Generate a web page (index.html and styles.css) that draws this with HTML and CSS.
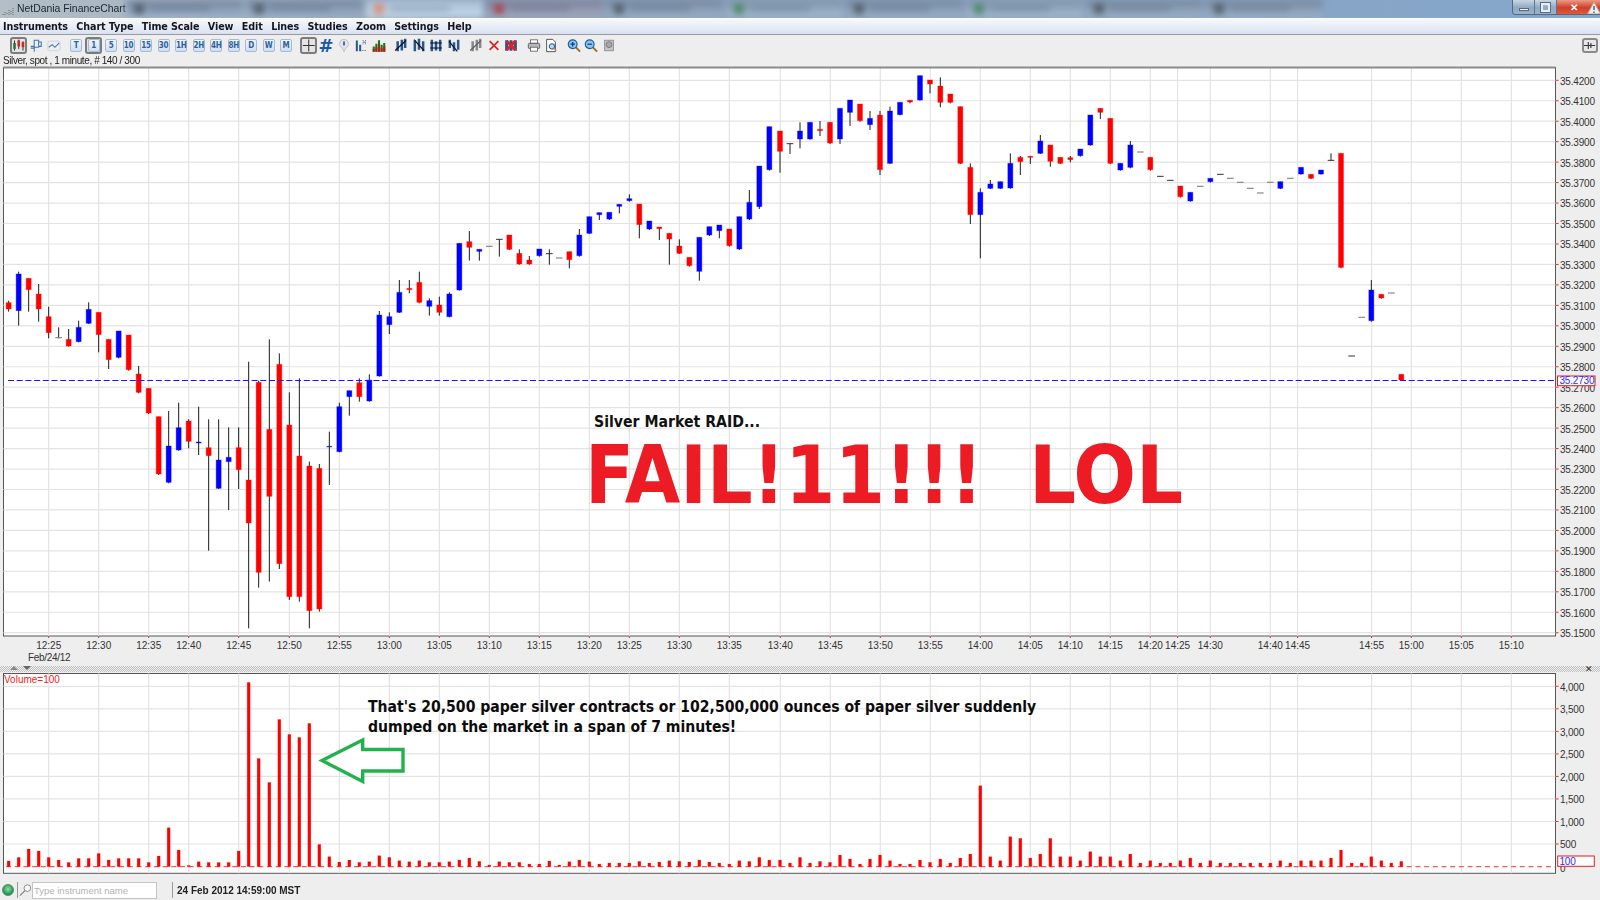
FILE: index.html
```html
<!DOCTYPE html>
<html lang="en">
<head>
<meta charset="utf-8">
<title>NetDania FinanceChart</title>
<link rel="stylesheet" href="styles.css">
</head>
<body>
<svg class="defs" width="0" height="0" aria-hidden="true">
  <symbol id="draw-a" viewBox="0 0 16 18"><path d="M4 4v12M9 2v13M13 1v11" stroke="#27578f" stroke-width="3"/><path d="M1 15 14 3" stroke="#111" stroke-width="1.4"/></symbol>
  <symbol id="draw-b" viewBox="0 0 16 18"><path d="M3 3v13M8 1v13M13 4v12" stroke="#27578f" stroke-width="3"/><path d="M2 2 14 15" stroke="#111" stroke-width="1.4"/></symbol>
  <symbol id="draw-c" viewBox="0 0 16 18"><path d="M3 2v14M8 4v11M13 2v14" stroke="#27578f" stroke-width="3"/><path d="M1 6h14M1 12h14" stroke="#111" stroke-width="1.2"/></symbol>
  <symbol id="draw-d" viewBox="0 0 16 18"><path d="M3 2v10M8 5v11M13 2v12" stroke="#27578f" stroke-width="3"/><path d="M2 4 12 16" stroke="#111" stroke-width="1.4"/></symbol>
</svg>

<header class="titlebar">
  <svg class="app-icon" viewBox="0 0 12 10"><path d="M1 8v1M3 6v3M5 7v2M7 4v5M9 5v4M11 2v7" stroke="#666" stroke-width="1" stroke-dasharray="1 1"/></svg>
  <span class="app-title">NetDania FinanceChart</span>
  <div class="tabs" aria-hidden="true">
    <i class="tab t1"></i><i class="tab t1"></i><i class="tab t2"></i><i class="tab t3"></i><i class="tab t1"></i><i class="tab t4"></i><i class="tab t1"></i><i class="tab t4"></i><i class="tab t1"></i><i class="tab t1"></i>
  </div>
  <div class="winbtns">
    <div class="winbtn"><i class="min"></i></div>
    <div class="winbtn"><i class="max"></i></div>
    <div class="winbtn close"><span>✕</span>
      <svg class="warn" viewBox="0 0 14 14"><path d="M7 1 13.5 13H.5Z" fill="#eee" stroke="#aaa"/><path d="M7 5v4M7 10.5v1.5" stroke="#555" stroke-width="1.4"/></svg>
    </div>
  </div>
</header>

<nav class="menubar">
  <span>Instruments</span><span>Chart Type</span><span>Time Scale</span><span>View</span><span>Edit</span><span>Lines</span><span>Studies</span><span>Zoom</span><span>Settings</span><span>Help</span>
</nav>

<div class="toolbar">
  <div class="tgroup first">
    <div class="slot on"><svg viewBox="0 0 16 16"><path d="M3 2v12M8 1v11M13 3v11" stroke="#111"/><rect x="1.5" y="5" width="3" height="7" fill="#1f7a2c"/><rect x="6.5" y="2" width="3" height="7" fill="#d2231f"/><rect x="11.5" y="4" width="3" height="6" fill="#d2231f"/></svg></div>
    <div class="slot"><svg viewBox="0 0 16 16" fill="none" stroke="#3f74b5" stroke-width="1.2"><path d="M2 9h4v6M6 11h-4M6 2h5v8H6zM11 4h3v5h-3"/></svg></div>
    <div class="slot"><svg viewBox="0 0 16 16" fill="none"><rect x="1" y="3" width="14" height="11" rx="2" stroke="#c3d3e6"/><path d="M2 10l4-3 3 3 5-5" stroke="#3f74b5" stroke-width="1.2"/></svg></div>
  </div>
  <div class="tgroup">
    <div class="slot"><b class="tf">T</b></div>
    <div class="slot on"><b class="tf">1</b></div>
    <div class="slot"><b class="tf">5</b></div>
    <div class="slot"><b class="tf">10</b></div>
    <div class="slot"><b class="tf">15</b></div>
    <div class="slot"><b class="tf">30</b></div>
    <div class="slot"><b class="tf">1H</b></div>
    <div class="slot"><b class="tf">2H</b></div>
    <div class="slot"><b class="tf">4H</b></div>
    <div class="slot"><b class="tf">8H</b></div>
    <div class="slot"><b class="tf">D</b></div>
    <div class="slot"><b class="tf">W</b></div>
    <div class="slot"><b class="tf">M</b></div>
  </div>
  <div class="tgroup">
    <div class="slot on"><svg viewBox="0 0 16 16"><path d="M8 1v14M1 8h14" stroke="#333" stroke-width="1.2"/></svg></div>
    <div class="slot hash">#</div>
    <div class="slot"><svg viewBox="0 0 16 16"><path d="M8 1a5 5 0 0 1 2 9.6L8 15l-2-4.4A5 5 0 0 1 8 1Z" fill="#e6e6ea" stroke="#bbb"/><path d="M8 3.5v4.5" stroke="#2c5fa8" stroke-width="2"/></svg></div>
    <div class="slot"><svg viewBox="0 0 16 18"><path d="M3 3v13M7 8v8" stroke="#27578f" stroke-width="2.4"/><path d="M10 3h1M13 3h1M10 7h1M13 7h1M10 5h4" stroke="#27578f"/><path d="M9 15h6" stroke="#27578f" stroke-dasharray="1 1"/></svg></div>
    <div class="slot"><svg viewBox="0 0 16 16"><path d="M2 15V9M5 15V6M8 15V2M11 15V7M14 15V5" stroke="#127a1e" stroke-width="2.4"/><path d="M2 15v-3M5 15v-5M8 15V7M11 15v-4M14 15v-6" stroke="#b0201a" stroke-width="2.4"/></svg></div>
  </div>
  <div class="tgroup">
    <div class="slot"><svg viewBox="0 0 16 18"><use href="#draw-a"/></svg></div>
    <div class="slot"><svg viewBox="0 0 16 18"><use href="#draw-b"/></svg></div>
    <div class="slot"><svg viewBox="0 0 16 18"><use href="#draw-c"/></svg></div>
    <div class="slot"><svg viewBox="0 0 16 18"><use href="#draw-d"/></svg></div>
  </div>
  <div class="tgroup">
    <div class="slot dim"><svg viewBox="0 0 16 18"><use href="#draw-a"/></svg></div>
    <div class="slot"><svg viewBox="0 0 16 16"><path d="M3 3l10 10M13 3 3 13" stroke="#d8232a" stroke-width="2"/></svg></div>
    <div class="slot"><svg viewBox="0 0 16 16"><path d="M3 2v12M8 2v12M13 2v12" stroke="#27578f" stroke-width="3.4"/><path d="M3 3l10 10M13 3 3 13" stroke="#d8232a" stroke-width="3.4"/></svg></div>
  </div>
  <div class="tgroup">
    <div class="slot"><svg viewBox="0 0 16 16"><rect x="4" y="1.5" width="8" height="4" fill="#fff" stroke="#666"/><rect x="1.5" y="5.5" width="13" height="6" rx="1.5" fill="#b8b8b8" stroke="#555"/><rect x="4" y="10" width="8" height="4.5" fill="#fff" stroke="#666"/></svg></div>
    <div class="slot"><svg viewBox="0 0 16 16"><path d="M3 1h7l3 3v11H3Z" fill="#fff" stroke="#444"/><circle cx="9" cy="9" r="3" fill="#bcd8f2" stroke="#2c5fa8" stroke-width="1.2"/><path d="M11 11l3 3" stroke="#c88a2a" stroke-width="1.6"/></svg></div>
  </div>
  <div class="tgroup">
    <div class="slot"><svg viewBox="0 0 16 16"><path d="M10 10l5 5" stroke="#a5701f" stroke-width="2.2"/><circle cx="6.5" cy="6.5" r="5" fill="#8fc3ee" stroke="#1d5fa8" stroke-width="1.4"/><path d="M4 6.5h5M6.5 4v5" stroke="#0d3c78" stroke-width="1.4"/></svg></div>
    <div class="slot"><svg viewBox="0 0 16 16"><path d="M10 10l5 5" stroke="#a5701f" stroke-width="2.2"/><circle cx="6.5" cy="6.5" r="5" fill="#8fc3ee" stroke="#1d5fa8" stroke-width="1.4"/><path d="M4 6.5h5" stroke="#0d3c78" stroke-width="1.4"/></svg></div>
    <div class="slot"><svg viewBox="0 0 16 16"><rect x="3" y="2" width="10" height="12" fill="#c6c6c6" stroke="#8a8a8a"/><circle cx="8" cy="7" r="3.4" fill="#a8a8a8" stroke="#777"/></svg></div>
  </div>
  <div class="pin"><svg viewBox="0 0 14 12"><path d="M0 6h13M5 2v8M8 3v6" stroke="#333" stroke-width="1.3"/></svg></div>
</div>

<div class="infoline">Silver, spot , 1 minute, # 140 / 300</div>

<svg id="price" class="panel price" viewBox="0 66 1600 600"></svg>

<div class="splitter">
  <i class="tri up"></i><i class="tri down"></i><span class="split-x">✕</span>
</div>

<svg id="volume" class="panel volume" viewBox="0 672 1600 202"></svg>

<footer class="statusbar">
  <i class="led"></i>
  <i class="vsep"></i>
  <svg class="search" viewBox="0 0 14 14"><circle cx="9" cy="5" r="3.6" fill="#f6f6f6" stroke="#888"/><path d="M6.5 7.5 1 13" stroke="#888" stroke-width="1.3"/></svg>
  <div class="instrument">Type instrument name</div>
  <i class="vsep wide"></i>
  <strong class="stamp">24 Feb 2012 14:59:00 MST</strong>
</footer>

<script src="chart.js"></script>
</body>
</html>
```
FILE: styles.css
```css
* { box-sizing: border-box; }
html, body { margin: 0; padding: 0; }
body {
  width: 1600px;
  height: 900px;
  overflow: hidden;
  background: #eeeeee;
  color: #222;
  font-family: "Liberation Sans", Arial, sans-serif;
  display: flex;
  flex-direction: column;
}
.defs { position: absolute; }

/* title bar */
.titlebar {
  height: 18px;
  flex: none;
  display: flex;
  align-items: flex-start;
  overflow: hidden;
  background: linear-gradient(90deg, #b3bec6 0, #a7b6c4 10%, #8aa0b8 30%, #8aa3bf 60%, #85a7cc 100%);
}
.app-icon { width: 12px; height: 10px; margin: 6px 0 0 2px; flex: none; }
.app-title { width: 112px; margin-left: 3px; padding-top: 2px; flex: none; font: 10.4px/13px "Liberation Sans", sans-serif; color: #1c2430; white-space: nowrap; filter: blur(.3px); }
.tabs { flex: 1; min-width: 0; overflow: hidden; display: flex; gap: 3px; height: 18px; margin-left: -3px; filter: blur(3px); }
.tab { width: 117px; height: 18px; flex: none; position: relative; }
.tab::before { content: ""; position: absolute; left: 8px; top: 4px; width: 10px; height: 10px; background: #56616f; }
.tab::after { content: ""; position: absolute; left: 24px; top: 7px; width: 60px; height: 4px; background: rgba(60,75,95,.3); }
.t1 { background: linear-gradient(#73859c, #9db4cc); }
.t2 { background: linear-gradient(#a9bdd1, #c5d9ec); }
.t2::before { background: #d98f7e; }
.t3 { background: linear-gradient(#7b7f98, #a4adc2); }
.t3::before { background: #a34a55; }
.t4 { background: linear-gradient(#7e92a8, #a4bcd2); }
.t4::before { background: #4f8a6a; }
.winbtns { flex: none; display: flex; height: 15px; border: 1px solid #55677c; border-top: 0; border-right: 0; border-radius: 0 0 0 4px; overflow: hidden; }
.winbtn { width: 22px; display: flex; align-items: center; justify-content: center; background: linear-gradient(#c8d6e4, #8ea9c4 55%, #9bb4cc); border-right: 1px solid #60748a; }
.winbtn.close { width: 43px; border-right: 0; position: relative; background: linear-gradient(#eb9a84, #cf3f26 55%, #dc5a40); color: #fff; font-size: 10px; font-weight: bold; justify-content: flex-start; padding-left: 13px; }
.min { width: 10px; height: 3px; margin-top: 5px; background: #f4f4f4; border: 1px solid #58687a; }
.max { width: 9px; height: 9px; background: transparent; border: 2px solid #e9eef3; outline: 1px solid #5c6c7e; }
.warn { position: absolute; right: -1px; top: 1px; width: 14px; height: 14px; }

/* menu */
.menubar {
  height: 16px;
  flex: none;
  display: flex;
  gap: 8.4px;
  padding: 1px 0 0 3px;
  background: linear-gradient(#f6f8fc, #d9e1f2);
  border-top: 1px solid #fff;
  font: bold 10.7px/13px "DejaVu Sans", sans-serif;
  font-stretch: condensed;
  letter-spacing: -.1px;
  color: #16161e;
  white-space: nowrap;
}
.menubar span { filter: blur(.3px); }

/* toolbar */
.toolbar {
  height: 21px;
  flex: none;
  display: flex;
  align-items: center;
  padding-left: 9.75px;
  border-top: 1px solid #9a9a9a;
}
.tgroup { display: flex; margin-left: 5px; }
.tgroup.first { margin-left: 0; }
.slot { width: 17.5px; height: 17px; display: flex; align-items: center; justify-content: center; flex: none; }
.slot svg { width: 14px; height: 15px; display: block; }
.slot.on { border: 2px solid #7c7c7c; border-radius: 3px; background: #e4e4e4; }
.slot.dim svg { filter: grayscale(1) opacity(.65); }
.tf {
  width: 12px; height: 13px;
  display: block;
  text-align: center;
  font: bold 8px/12px "DejaVu Sans", sans-serif;
  font-stretch: condensed;
  color: #2e5f9e;
  background: linear-gradient(#f0f5fb, #cfdff0);
  border: 1px solid #a3bbd6;
  border-radius: 2px;
  letter-spacing: -.3px;
}
.hash { font: bold 18px/17px "DejaVu Sans", sans-serif; color: #1557a8; }
.pin { margin-left: auto; margin-right: 2px; width: 16px; height: 15px; border: 2px solid #8a8a8a; border-radius: 3px; background: #e8e8e8; display: flex; }
.pin svg { width: 12px; height: 11px; }

.infoline { height: 11px; flex: none; padding-left: 3px; font-size: 10px; line-height: 11px; color: #222; letter-spacing: -.4px; white-space: nowrap; filter: blur(.3px); }

/* chart panels */
.panel { display: block; flex: none; width: 1600px; }
.price { height: 600px; }
.volume { height: 202px; }
.frame { fill: #fff; stroke: #555; stroke-width: 1; }
.frame-top { stroke: #8a8a8a; stroke-width: 2; }
.grid { stroke: #e3e3e3; stroke-width: 1.2; }
.tick { stroke: #ee2a2a; stroke-width: 1; }
.axis { font: 10px "Liberation Sans", Arial, sans-serif; letter-spacing: -.2px; fill: #333; }
.time { font: 10px "Liberation Sans", Arial, sans-serif; fill: #333; text-anchor: middle; }
.date { font: 10px "Liberation Sans", Arial, sans-serif; letter-spacing: -.3px; fill: #333; }
.wick { stroke: #1c1c1c; stroke-width: 1; }
.doji-k { stroke: #333; stroke-width: 1; }
.doji-g { stroke: #888; stroke-width: 1.2; }
.body-r { fill: #ff0000; stroke: #ff0000; stroke-opacity: .35; stroke-width: 1; }
.body-b { fill: #0000ff; stroke: #0000ff; stroke-opacity: .35; stroke-width: 1; }
.bar { fill: #ff0000; stroke: #ff0000; stroke-opacity: .25; stroke-width: .6; }
.priceline { stroke: #1414ff; stroke-width: 1; stroke-dasharray: 6 2.7; }
.volline { stroke: #ff3030; stroke-width: 1; stroke-dasharray: 5 3.7; }
.tagbox { fill: #fff; stroke: #f01818; stroke-width: 1; }
.tag { font: 10px "Liberation Sans", Arial, sans-serif; letter-spacing: -.2px; fill: #2a2aff; }
.vol-title { font: 10px "Liberation Sans", Arial, sans-serif; fill: #ff2020; }
.raid { font: bold 15.7px "DejaVu Sans", sans-serif; font-stretch: condensed; fill: #111; }
.fail { font: bold 81px "DejaVu Sans", sans-serif; font-stretch: condensed; fill: #ed1c24; }
.note { font: bold 15.6px "DejaVu Sans", sans-serif; font-stretch: condensed; fill: #0c0c0c; }
.arrow { fill: #fff; stroke: #22b14c; stroke-width: 3.4; }

/* splitter */
.splitter {
  height: 6px;
  flex: none;
  position: relative;
  background: repeating-conic-gradient(#bdbdbd 0 25%, #f2f2f2 0 50%) 0 0 / 2px 2px;
}
.tri { position: absolute; top: 0; width: 0; height: 0; border-left: 4px solid transparent; border-right: 4px solid transparent; }
.tri.up { left: 10px; border-bottom: 4px solid #888; }
.tri.down { left: 23px; border-top: 4px solid #666; }
.split-x { position: absolute; right: 7px; top: -2px; font-size: 9px; line-height: 10px; color: #333; }

/* status bar */
.statusbar { flex: 1; display: flex; align-items: center; padding: 6px 0 0 2px; }
.led { width: 12px; height: 12px; border-radius: 50%; flex: none; background: radial-gradient(circle at 50% 40%, #8fe0a8, #1f9a55 65%, #146b3a); border: 1px solid #5a8a6a; }
.vsep { width: 1px; height: 16px; margin-left: 3px; background: #999; flex: none; }
.vsep.wide { margin-left: 15px; }
.search { width: 13px; height: 14px; margin-left: 1px; flex: none; }
.instrument { width: 125px; height: 17px; padding-left: 1px; background: #fff; border: 1px solid #c4c4c4; font-size: 9.5px; line-height: 15px; color: #b2b2b2; white-space: nowrap; flex: none; }
.stamp { margin-left: 4px; font-size: 10px; color: #222; white-space: nowrap; filter: blur(.25px); }
```
FILE: chart.js
```js
// [x, bodyTop, bodyBottom, wickTop, wickBottom, kind] measured in 3x chart units per segment
var seg1 = [
[26,128,147,122,155,'r'],[56,42,152,35,197,'b'],[86,55,89,55,155,'r'],[116,102,147,72,185,'r'],[146,170,218,140,235,'r'],
[176,233,233,202,235,'g'],[206,238,258,207,260,'r'],[236,202,245,182,247,'b'],[266,148,190,127,192,'b'],[296,157,224,157,277,'r'],
[326,238,299,238,327,'r'],[356,213,292,213,295,'b'],[386,225,329,225,332,'r'],[416,342,397,318,400,'r'],[446,385,459,385,462,'r'],
[476,470,642,470,645,'r'],[506,558,667,453,670,'b'],[536,503,570,428,572,'b'],[566,483,544,478,565,'r'],[596,546,549,440,585,'b'],
[626,563,587,478,872,'r'],[656,600,685,478,687,'b'],[686,592,605,502,750,'b'],[716,563,629,502,687,'r'],[746,660,789,305,1105,'r'],
[776,367,937,362,983,'r'],[808,508,709,238,965,'r'],[838,313,911,280,927,'r'],[868,495,1010,397,1020,'r'],[898,588,1010,355,1025,'r'],
[928,618,1052,605,1105,'r'],[958,625,1047,612,1055,'r'],[988,559,561,515,675,'b'],[1018,440,575,428,577,'b'],[1048,392,410,392,467,'b'],
[1078,368,410,355,425,'r'],[1108,360,423,343,425,'b'],[1138,165,348,153,350,'b'],[1168,170,194,157,222,'b'],[1198,97,157,60,159,'b'],
[1228,85,89,60,100,'r'],[1258,67,127,35,130,'r'],[1288,122,139,115,167,'b'],[1318,135,157,110,167,'r'],[1348,102,170,97,172,'b']
];
var seg2 = [
[58,550,690,550,692,'b'],[88,545,562,513,602,'r'],[118,568,574,568,602,'b'],[148,559,559,559,559,'g'],[178,538,538,538,590,'k'],
[208,525,568,525,570,'r'],[238,580,612,568,614,'r'],[268,600,612,588,614,'r'],[298,567,587,567,590,'b'],[328,581,581,568,614,'k'],
[358,594,594,594,594,'g'],[388,575,599,575,625,'r'],[418,525,587,507,590,'b'],[448,470,520,470,522,'b'],[478,458,464,458,480,'b'],
[508,457,477,457,480,'b'],[538,433,439,433,460,'b'],[568,416,422,403,425,'b'],[598,432,494,432,535,'r'],[628,483,507,483,510,'b'],
[658,501,506,501,540,'r'],[688,520,537,520,614,'r'],[718,558,580,538,582,'r'],[748,592,617,592,620,'r'],[778,532,634,532,662,'b'],
[808,500,525,500,528,'b'],[838,495,512,495,535,'b'],[868,507,557,507,560,'r'],[898,470,567,470,570,'b'],[928,427,477,390,480,'b'],
[958,318,440,318,447,'b'],[988,200,329,200,332,'b'],[1020,213,274,213,338,'r'],[1050,251,251,251,282,'k'],[1080,213,237,187,265,'b'],
[1110,187,237,187,239,'b'],[1140,208,212,183,228,'r'],[1170,187,249,187,252,'r'],[1200,145,237,145,252,'b'],[1230,120,157,120,198,'b'],
[1260,132,182,132,185,'r'],[1290,175,194,153,210,'b'],[1320,165,329,153,345,'r'],[1350,153,310,140,312,'b'],[1380,127,164,127,166,'b'],
[1410,121,126,121,130,'r'],[1440,47,120,47,122,'b'],[1470,60,72,60,100,'r']
];
var seg3 = [
[61,78,127,52,142,'r'],[91,102,127,102,130,'r'],[121,140,310,140,312,'r'],[151,322,464,310,492,'r'],[181,397,464,385,595,'b'],
[211,372,385,360,387,'b'],[241,365,385,365,387,'b'],[271,310,384,280,386,'b'],[301,292,305,288,345,'r'],[331,289,292,288,312,'r'],
[361,243,280,225,282,'b'],[391,255,304,255,320,'r'],[421,292,310,292,312,'r'],[451,293,299,288,307,'r'],[481,267,287,267,290,'b'],
[511,165,255,165,257,'b'],[541,145,157,145,177,'r'],[571,175,310,175,312,'r'],[601,310,330,310,332,'b'],[631,255,322,243,325,'b'],
[661,276,276,276,276,'g'],[691,292,329,292,332,'r'],[721,349,349,349,349,'k'],[751,361,361,361,361,'k'],[781,378,410,378,413,'r'],
[811,397,423,397,425,'b'],[841,379,379,379,379,'g'],[871,355,365,355,368,'b'],[901,343,343,343,343,'k'],[931,355,355,355,355,'g'],
[961,367,367,367,367,'g'],[991,385,385,385,385,'g'],[1021,399,399,399,399,'g'],[1051,367,367,367,367,'g'],[1081,365,385,365,387,'b'],
[1111,355,355,355,355,'g'],[1143,322,342,322,344,'b'],[1173,343,355,343,357,'r'],[1203,330,342,330,344,'b'],[1233,301,301,280,302,'k'],
[1263,280,622,280,625,'r'],[1295,888,888,888,888,'k'],[1325,772,772,772,772,'g'],[1354,690,782,660,785,'b'],[1384,703,714,703,716,'r'],
[1414,699,699,699,699,'g'],[1444,943,960,943,960,'r']
];

var candles = [];
[[seg1, 0, 260], [seg2, 440, 60], [seg3, 920, 60]].forEach(function (s) {
  s[0].forEach(function (c) {
    candles.push({
      x: s[1] + c[0] / 3,
      top: s[2] + c[1] / 3, bot: s[2] + c[2] / 3,
      wt: s[2] + c[3] / 3, wb: s[2] + c[4] / 3,
      k: c[5]
    });
  });
});

// volume bar heights, px
var volA = [5.7,9.3,17.7,15.7,9.3,6.7,4.3,8.3,8.3,13.3,6.7,8.3,8.3,8.3,4.3,10.7,39,16.7,1.3,5,4.3,4.3,4.3,15.7,184.3,108.3,84.3,147.3,132.3,129.3,143.3,22.3];
// the rest, as bar tops in 3x units above a baseline of 200
var volB = [170,186,180,187,185,167,172,182,185,182,187,187,185,180,174,184,195,185,187,187,192,192,183,195,185,180,185,192,189,189,189,184,189,186,182,184,186,180,186,189,192,182,184,172,180,180,189,172,189,184,187,165,177,192,177,165,182,192,192,180,187,177,189,174,162,-43,170,182,110,115,174,162,115,170,170,182,155,170,170,182,162,189,182,189,189,182,174,189,182,189,189,189,189,189,189,182,189,182,182,182,174,150,189,189,170,182,189,184];
var volumes = volA.concat(volB.map(function (t) { return (200 - t) / 3; }));

var gridX = [48.7,98.7,148.7,188.7,238.7,289.3,339.3,389.3,439.3,489.3,539.3,589.3,629.3,679.3,729.3,780.3,830.3,880.3,930.3,980.3,1030.3,1070.3,1110.3,1150.3,1177.6,1210.3,1270.3,1297.6,1371.6,1411.3,1461.3,1511.3];
var timeLabels = ['12:25','12:30','12:35','12:40','12:45','12:50','12:55','13:00','13:05','13:10','13:15','13:20','13:25','13:30','13:35','13:40','13:45','13:50','13:55','14:00','14:05','14:10','14:15','14:20','14:25','14:30','14:40','14:45','14:55','15:00','15:05','15:10'];

function line(x1, y1, x2, y2, cls) {
  return '<line x1="' + x1 + '" y1="' + y1 + '" x2="' + x2 + '" y2="' + y2 + '" class="' + cls + '"/>';
}
function text(x, y, cls, s) {
  return '<text x="' + x + '" y="' + y + '" class="' + cls + '">' + s + '</text>';
}

var L = 3.5, R = 1555.5;

// price panel
(function () {
  var T = 67.5, B = 636, out = '';
  out += '<rect x="' + L + '" y="' + T + '" width="' + (R - L) + '" height="' + (B - T) + '" class="frame"/>';
  var i, y;
  for (i = 0; i <= 27; i++) {
    y = 80.3 + 20.46 * i;
    out += line(L, y, R, y, 'grid');
  }
  gridX.forEach(function (x, n) {
    out += line(x, T, x, B, 'grid');
    out += line(x, B, x, B + 2, 'tick');
    out += text(x, 648.5, 'time', timeLabels[n]);
  });
  out += line(L, T, R, T, 'frame-top');
  out += text(28, 661, 'date', 'Feb/24/12');
  for (i = 0; i <= 27; i++) {
    y = 80.3 + 20.46 * i;
    out += line(R, y, R + 3, y, 'tick');
    out += text(1560, y + 4.4, 'axis', (35.42 - i * 0.01).toFixed(4));
  }
  candles.forEach(function (c) {
    if (c.k === 'g' || c.k === 'k') {
      if (c.wb > c.wt) out += line(c.x, c.wt, c.x, c.wb, 'wick');
      out += line(c.x - 3.3, c.top, c.x + 3.3, c.top, 'doji-' + c.k);
      return;
    }
    if (c.wb > c.wt) out += line(c.x, c.wt, c.x, c.wb, 'wick');
    out += '<rect x="' + (c.x - 2.5) + '" y="' + c.top + '" width="5" height="' + (c.bot - c.top) + '" class="body-' + c.k + '"/>';
  });
  out += line(8, 380.5, R, 380.5, 'priceline');
  out += '<rect x="1557.5" y="376" width="37.5" height="9.7" class="tagbox"/>';
  out += text(1559.5, 384.4, 'tag', '35.2730');
  out += text(594, 426.5, 'raid', 'Silver Market RAID...');
  out += '<text y="503" class="fail"><tspan x="585" textLength="398" lengthAdjust="spacingAndGlyphs">FAIL!11!!!</tspan> <tspan x="1029" textLength="154" lengthAdjust="spacingAndGlyphs">LOL</tspan></text>';
  document.getElementById('price').innerHTML = out;
})();

// volume panel
(function () {
  var T = 673.5, B = 873.3, Z = 866.7, out = '';
  out += '<rect x="' + L + '" y="' + T + '" width="' + (R - L) + '" height="' + (B - T) + '" class="frame"/>';
  var labels = ['4,000','3,500','3,000','2,500','2,000','1,500','1,000','500','0'];
  labels.forEach(function (s, i) {
    var y = 686.3 + 22.53 * i;
    if (i < 8) out += line(L, y, R, y, 'grid');
  });
  gridX.forEach(function (x) { out += line(x, T, x, B, 'grid'); });
  labels.forEach(function (s, i) {
    var y = 686.3 + 22.53 * i;
    if (i < 8) out += line(R, y, R + 3, y, 'tick');
    out += text(1560, y + (i === 8 ? 5 : 4.3), 'axis', s);
  });
  out += line(6, Z, R, Z, 'volline');
  candles.forEach(function (c, i) {
    var h = volumes[i];
    out += '<rect x="' + (c.x - 1.5) + '" y="' + (Z - h) + '" width="3" height="' + h + '" class="bar"/>';
  });
  out += '<rect x="1557.7" y="856" width="36.6" height="10.3" class="tagbox"/>';
  out += text(1559.5, 865, 'tag', '100');
  out += text(4, 683, 'vol-title', 'Volume=100');
  out += '<polygon points="322,760.5 362.7,740 362.7,749.5 403,749.5 403,771 362.7,771 362.7,781.5" class="arrow"/>';
  out += text(368, 712, 'note', "That's 20,500 paper silver contracts or 102,500,000 ounces of paper silver suddenly");
  out += text(368, 731.5, 'note', 'dumped on the market in a span of 7 minutes!');
  document.getElementById('volume').innerHTML = out;
})();
```
